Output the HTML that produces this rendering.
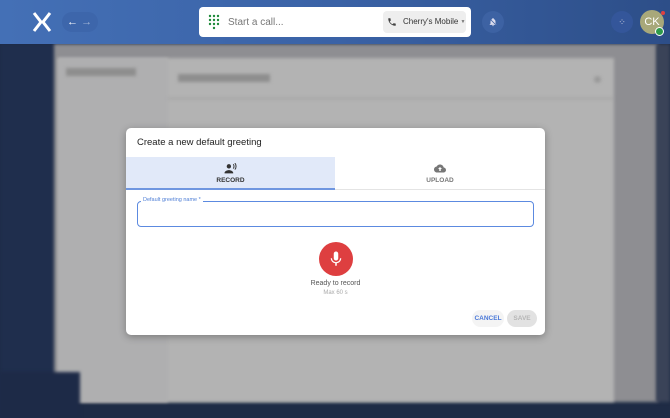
<!DOCTYPE html>
<html><head><meta charset="utf-8"><style>
*{box-sizing:border-box;margin:0;padding:0}
body{width:670px;height:418px;overflow:hidden;position:relative;font-family:"Liberation Sans",sans-serif;background:#1e2b45}
.hdr{position:absolute;left:0;top:0;width:670px;height:44px;background:linear-gradient(90deg,#4470b6,#3a62a6 50%,#2d4e88)}
.bg{position:absolute;filter:blur(1.5px)}
</style></head><body>
<div class="bg" style="left:0;top:44px;width:56px;height:374px;background:#1f2e4d"></div>
<div class="bg" style="left:54px;top:44px;width:604px;height:358px;background:#8e8e92"></div>
<div class="bg" style="left:656px;top:44px;width:14px;height:358px;background:#3a4358"></div>
<div class="bg" style="left:58px;top:58px;width:556px;height:344px;background:#b3b3b3"></div>
<div class="bg" style="left:58px;top:58px;width:110px;height:344px;background:#afafb0"></div>
<div class="bg" style="left:0;top:372px;width:80px;height:46px;background:#1d2a47"></div>
<div class="bg" style="left:66px;top:68px;width:70px;height:8px;background:#8e8e8e"></div>
<div class="bg" style="left:178px;top:74px;width:92px;height:8px;background:#8e8e8e"></div>
<div class="bg" style="left:168px;top:98px;width:446px;height:1px;background:#999"></div>
<div class="bg" style="left:594px;top:76px;width:7px;height:7px;border-radius:50%;background:#999"></div>

<div class="hdr"></div>
<svg style="position:absolute;left:32px;top:12px" width="20" height="20" viewBox="0 0 20 20"><path d="M2 1 L9 10 L2 19 M18 1 L11 10 L18 19" stroke="#fff" stroke-width="3" fill="none"/></svg>
<div style="position:absolute;left:62px;top:12px;width:36px;height:20px;border-radius:10px;background:#3d66ab;color:#fff;font-size:11px;line-height:20px;padding-left:5px">← <span style="opacity:.5">→</span></div>
<div style="position:absolute;left:199px;top:7px;width:272px;height:30px;background:#fff;border-radius:4px"></div>
<svg style="position:absolute;left:208px;top:14px" width="12" height="16" viewBox="0 0 12 16"><g fill="#1e8a3a"><circle cx="2" cy="2" r="1.2"/><circle cx="6" cy="2" r="1.2"/><circle cx="10" cy="2" r="1.2"/><circle cx="2" cy="6" r="1.2"/><circle cx="6" cy="6" r="1.2"/><circle cx="10" cy="6" r="1.2"/><circle cx="2" cy="10" r="1.2"/><circle cx="6" cy="10" r="1.2"/><circle cx="10" cy="10" r="1.2"/><circle cx="6" cy="14" r="1.2"/></g></svg>
<div style="position:absolute;left:228px;top:17px;font-size:10px;color:#777">Start a call...</div>
<div style="position:absolute;left:383px;top:11px;width:83px;height:22px;background:#eee;border-radius:4px;font-size:8px;color:#333;line-height:22px;padding-left:20px;white-space:nowrap">Cherry's Mobile <span style="color:#777;font-size:5px;vertical-align:1px">▼</span></div>
<svg style="position:absolute;left:387px;top:17px" width="10" height="10" viewBox="0 0 24 24"><path d="M6.6 10.8c1.4 2.8 3.8 5.1 6.6 6.6l2.2-2.2c.3-.3.7-.4 1-.2 1.1.4 2.3.6 3.6.6.6 0 1 .4 1 1V20c0 .6-.4 1-1 1C10.6 21 3 13.4 3 4c0-.6.4-1 1-1h3.5c.6 0 1 .4 1 1 0 1.3.2 2.5.6 3.6.1.3 0 .7-.2 1z" fill="#444"/></svg>
<div style="position:absolute;left:482px;top:11px;width:22px;height:22px;border-radius:50%;background:#3d62a3"></div>
<svg style="position:absolute;left:488px;top:16px" width="10" height="12" viewBox="0 0 24 24"><path d="M12 22c1.1 0 2-.9 2-2h-4c0 1.1.9 2 2 2zm6-6v-5c0-3.1-1.6-5.6-4.5-6.3V4c0-.8-.7-1.5-1.5-1.5S10.5 3.2 10.5 4v.7C7.6 5.4 6 7.9 6 11v5l-2 2v1h16v-1z" fill="#dde"/><path d="M3 3 L21 21" stroke="#3d62a3" stroke-width="2"/></svg>
<div style="position:absolute;left:611px;top:11px;width:22px;height:22px;border-radius:50%;background:#34569a;color:#ccd;font-size:9px;text-align:center;line-height:22px">⁘</div>
<div style="position:absolute;left:640px;top:10px;width:24px;height:24px;border-radius:50%;background:#a8a87a;color:#fff;font-size:11px;line-height:24px;text-align:center">CK</div>
<div style="position:absolute;left:655px;top:27px;width:9px;height:9px;border-radius:50%;background:#2e9a4a;border:1.5px solid #fff"></div>
<div style="position:absolute;left:661px;top:11px;width:4px;height:4px;border-radius:50%;background:#e04040"></div>

<div style="position:absolute;left:126px;top:128px;width:419px;height:207px;background:#fff;border-radius:5px;overflow:hidden;box-shadow:0 2px 8px rgba(0,0,0,.3)">
 <div style="position:absolute;left:11px;top:9px;font-size:9.5px;color:#222">Create a new default greeting</div>
 <div style="position:absolute;left:0;top:29px;width:209px;height:33px;background:#e1e9f9;border-bottom:2px solid #6f96e0"></div>
 <div style="position:absolute;left:209px;top:61px;width:210px;height:1px;background:#e4e4e4"></div>
 <svg style="position:absolute;left:98px;top:35px" width="13" height="11" viewBox="0 0 24 20"><circle cx="9" cy="6" r="4" fill="#333"/><path d="M1 18c0-3 5-5 8-5s8 2 8 5v1H1z" fill="#333"/><path d="M17 2c2 2 2 6 0 8M20 0c3 3 3 9 0 12" stroke="#333" stroke-width="1.8" fill="none"/></svg>
 <div style="position:absolute;left:0;top:49px;width:209px;text-align:center;font-size:6.5px;font-weight:bold;color:#333">RECORD</div>
 <svg style="position:absolute;left:308px;top:36px" width="12" height="9" viewBox="0 0 24 16"><path d="M19.4 6C18.7 2.6 15.7 0 12 0 9.1 0 6.6 1.6 5.4 4 2.3 4.4 0 6.9 0 10c0 3.3 2.7 6 6 6h13c2.8 0 5-2.2 5-5 0-2.6-2.1-4.8-4.6-5z" fill="#777"/><path d="M12 5 L8 9 H10.5 V13 H13.5 V9 H16z" fill="#fff"/></svg>
 <div style="position:absolute;left:209px;top:49px;width:210px;text-align:center;font-size:6.5px;font-weight:bold;color:#777">UPLOAD</div>
 <div style="position:absolute;left:11px;top:73px;width:397px;height:26px;border:1.5px solid #5c8ae0;border-radius:4px"></div>
 <div style="position:absolute;left:15px;top:69px;background:#fff;padding:0 2px;font-size:5.5px;color:#4f7fd6">Default greeting name *</div>
 <div style="position:absolute;left:193px;top:114px;width:34px;height:34px;border-radius:50%;background:#de3f40"></div>
 <svg style="position:absolute;left:201px;top:122px" width="18" height="18" viewBox="0 0 24 24"><path d="M12 14c1.7 0 3-1.3 3-3V5c0-1.7-1.3-3-3-3S9 3.3 9 5v6c0 1.7 1.3 3 3 3zm5.3-3c0 3-2.5 5.1-5.3 5.1S6.7 14 6.7 11H5c0 3.4 2.7 6.2 6 6.7V21h2v-3.3c3.3-.5 6-3.3 6-6.7z" fill="#fff"/></svg>
 <div style="position:absolute;left:0;top:152px;width:419px;text-align:center;font-size:7px;color:#555">Ready to record</div>
 <div style="position:absolute;left:0;top:162px;width:419px;text-align:center;font-size:6px;color:#aaa">Max 60 s</div>
 <div style="position:absolute;left:346px;top:182px;width:32px;height:17px;border-radius:9px;background:#f4f4f4;font-size:6.5px;font-weight:bold;color:#4a78d8;text-align:center;line-height:17px">CANCEL</div>
 <div style="position:absolute;left:381px;top:182px;width:30px;height:17px;border-radius:9px;background:#e2e2e2;font-size:6.5px;font-weight:bold;color:#b5b5b5;text-align:center;line-height:17px">SAVE</div>
</div>
</body></html>
